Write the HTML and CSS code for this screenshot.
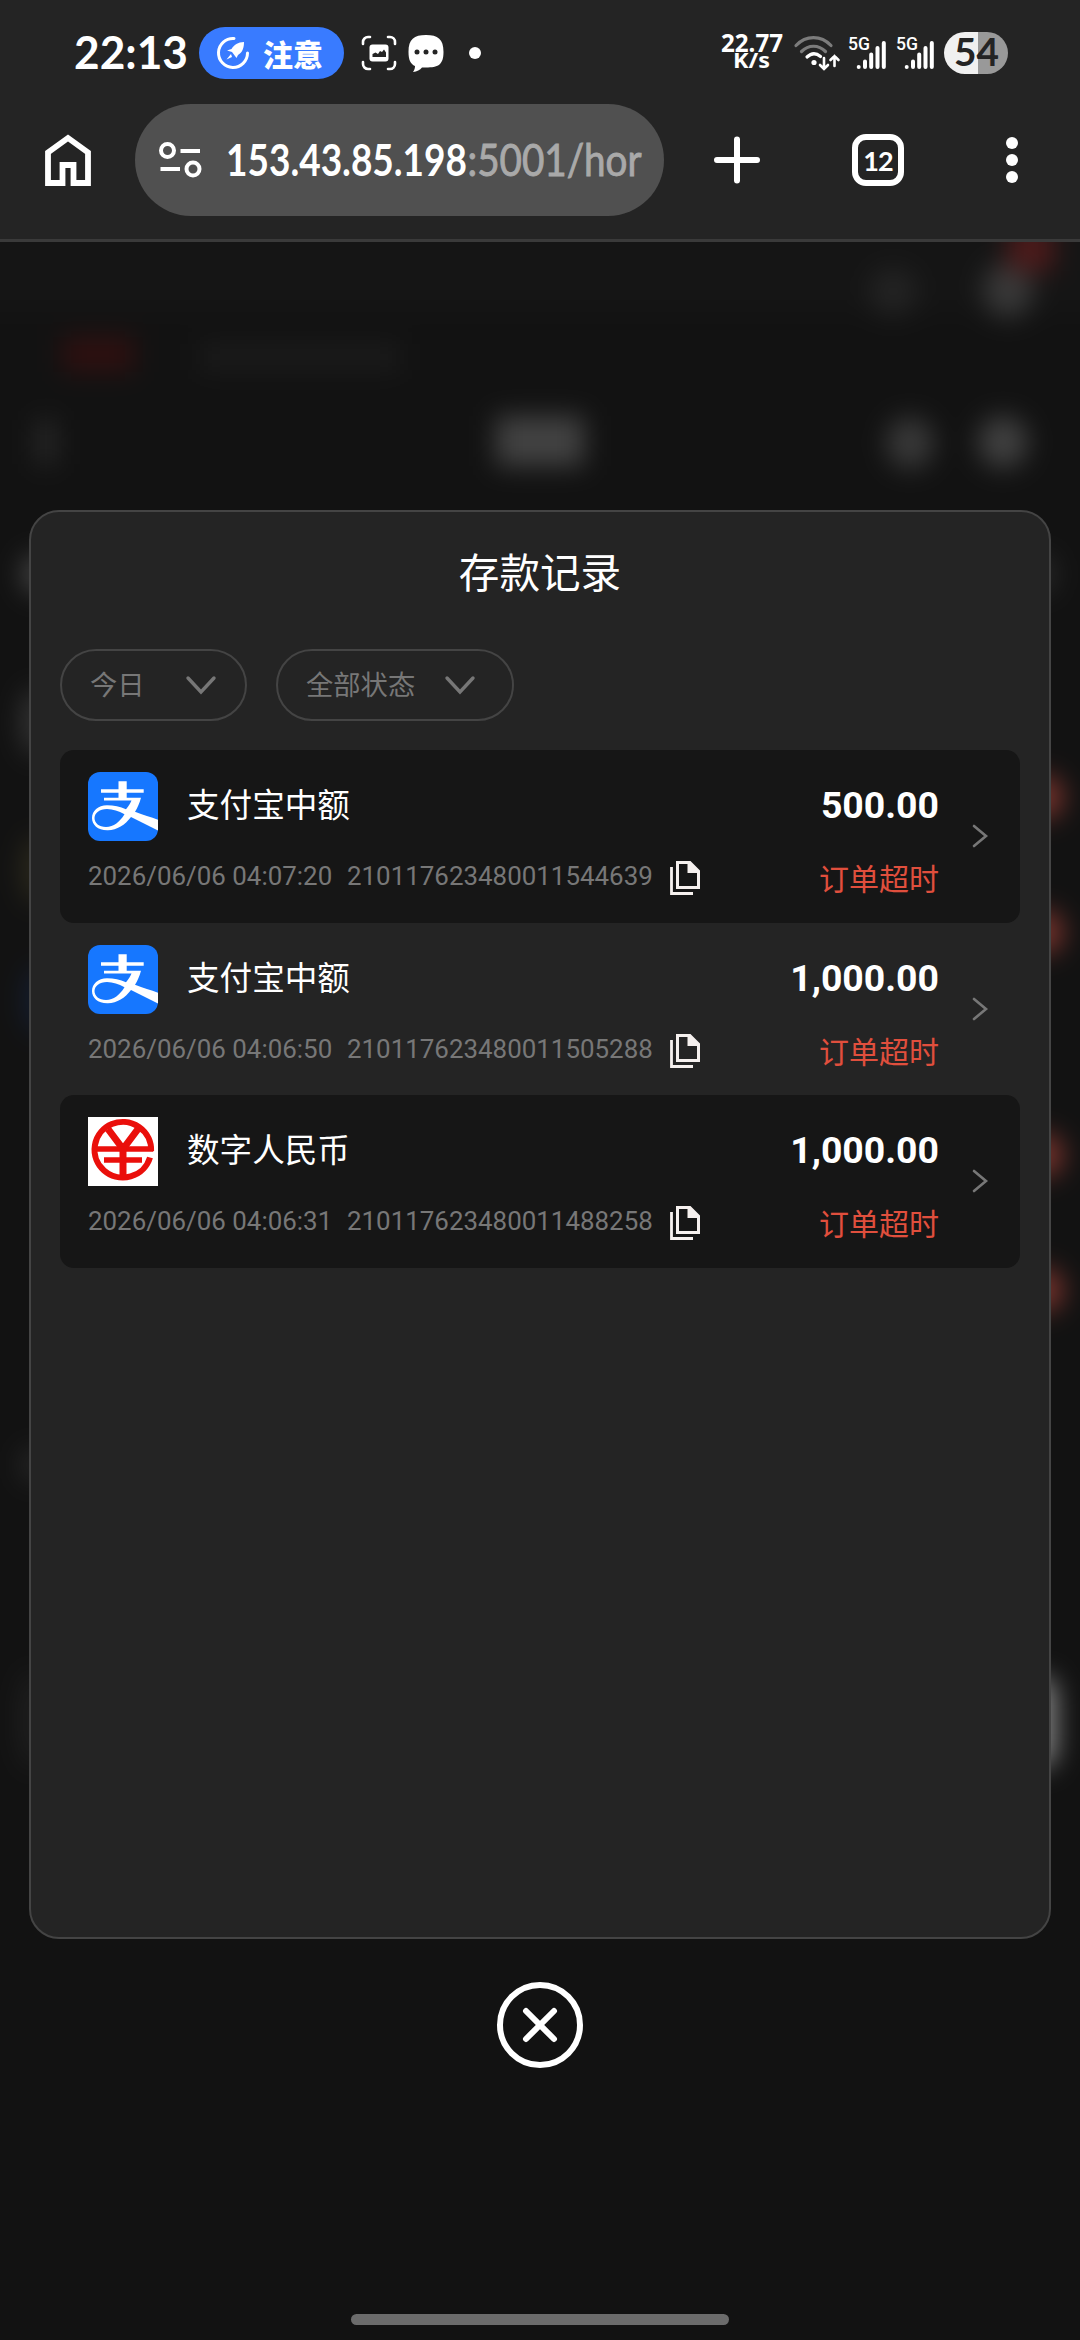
FILE: index.html
```html
<!DOCTYPE html>
<html lang="zh-CN">
<head>
<meta charset="utf-8">
<title>存款记录</title>
<link rel="stylesheet" href="styles.css">
</head>
<body>
<svg class="defs" width="0" height="0" aria-hidden="true">
  <symbol id="alipay" viewBox="0 0 70 69">
    <rect width="70" height="69" rx="12" fill="#1677ff"/>
    <path d="M30.5 9.300h8.200v8h17v3.500h-17v5H53c-1.500 5.500-3.500 10-6 14 8 3 16 5.500 23 8v10.700L43 45c-6 8-14 13-23 13.200C10 58.500 4 53 4 46c0-7 6-12.500 15-12.700 7 0 13 1.500 19 4 2.500-3 4.500-6 5.500-8.700H16v-2.800h14.500v-5H13v-3.500h17.500z" fill="#fff"/>
    <path d="M36.500 42.200c-6-3-11.500-5.200-17.500-5.200-7.500 0-12.500 4-12.500 9s4.500 9 11.500 9c7.500 0 14-5.500 18.500-12.800z" fill="#1677ff"/>
  </symbol>
  <symbol id="ecny" viewBox="0 0 70 69">
    <rect width="70" height="69" fill="#fff"/>
    <g fill="none" stroke="#ea0f0b">
      <path d="M63.100 34A28.300 27.800 0 1 0 62 40.500" stroke-width="6"/>
      <path d="M20 12l15 20 15-20" stroke-width="7"/>
      <path d="M7 32h58M16 43h38" stroke-width="5.500"/>
      <path d="M35 30v31" stroke-width="7"/>
    </g>
  </symbol>
  <symbol id="copy" viewBox="0 0 30 34">
    <path d="M6 0h14.500L30 9.500V28H6zM9 3v22h18V12h-9.500V3z" fill="#f5f0ee" fill-rule="evenodd"/>
    <path d="M1.500 6v26.500H23" fill="none" stroke="#f5f0ee" stroke-width="2.800"/>
  </symbol>
  <symbol id="signal" viewBox="0 0 40 36">
    <g stroke="#fff" stroke-width="4" stroke-linecap="round"><path d="M10.700 32v.1M17 26.500V32M23.200 19.500V32M29.500 13V32M35.800 8V32"/></g>
  </symbol>
</svg>

<header class="status">
  <svg class="clock" width="116" height="60"><text x="0" y="45" textLength="114" lengthAdjust="spacingAndGlyphs">22:13</text></svg>
  <div class="notice">
    <svg width="32" height="32" viewBox="0 0 32 32"><path d="M17 1.500A14.500 14.500 0 1 0 30.500 16" fill="none" stroke="#fff" stroke-width="3" stroke-linecap="round"/><path d="M27 5c-6 0-10 3-12.500 7L10 13.500l5 1.500 3 4 1.500 2L21 18c5-3 6-8 6-13zM14 17l-4.500 5.500L15 20z" fill="#fff"/></svg>
    <span>注意</span>
  </div>
  <svg class="shot" width="36" height="36" viewBox="0 0 36 36"><path d="M2 9V7a5 5 0 0 1 5-5h2M27 2h2a5 5 0 0 1 5 5v2M34 27v2a5 5 0 0 1-5 5h-2M9 34H7a5 5 0 0 1-5-5v-2" fill="none" stroke="#fff" stroke-width="2.600" stroke-linecap="round"/><rect x="8.500" y="9.500" width="19" height="17" rx="3" fill="#fff"/><path d="M11.500 22v-3l3-1.500 2.500 1.500 2-3 2 1 2-2.500 2 3V22z" fill="#242424"/></svg>
  <svg class="chat" width="36" height="37" viewBox="0 0 36 37"><path d="M18 0C30 0 35.500 4 35.500 17S30 32.500 18 32.500h-4C12 35 9 36.500 5 37c1.500-2 2-4 2-6-4.500-2-6.500-6-6.500-14C.500 4 6 0 18 0z" fill="#fff"/><g fill="#242424"><circle cx="9" cy="17" r="2.500"/><circle cx="18" cy="17" r="2.500"/><circle cx="27" cy="17" r="2.500"/></g></svg>
  <span class="dot"></span>
  <svg class="speed" width="64" height="60"><text x="0" y="29" font-size="24.500" textLength="62" lengthAdjust="spacingAndGlyphs">22.77</text><text x="12" y="45" font-size="21.500" textLength="37" lengthAdjust="spacingAndGlyphs">K/s</text></svg>
  <svg class="wifi" width="46" height="36" viewBox="0 0 46 36"><g fill="none" stroke-width="3.200" stroke-linecap="round"><path d="M2 10.500c10-10.500 25-10.500 35 0" stroke="#7c7c7c"/><path d="M7.500 16.500c7-7 17-7 24 0" stroke="#7c7c7c"/><path d="M13 22c4.500-4.300 9-4.300 13.500-.5" stroke="#fff"/></g><circle cx="20" cy="27.500" r="2.600" fill="#fff"/><path d="M30 23v10M26 30l4 4 4-4M40.500 31V21M36.500 25l4-4 4 4" fill="none" stroke="#fff" stroke-width="2.600" stroke-linecap="round"/></svg>
  <svg class="sig" width="40" height="36"><use href="#signal"/><text x="0" y="14.500" textLength="22" lengthAdjust="spacingAndGlyphs">5G</text></svg>
  <svg class="sig sig2" width="40" height="36"><use href="#signal"/><text x="0" y="14.500" textLength="22" lengthAdjust="spacingAndGlyphs">5G</text></svg>
  <svg class="battery" width="64" height="42"><path d="M34 0H21a21 21 0 0 0 0 42h13z" fill="#f0f0f0"/><path d="M34 0h9a21 21 0 0 1 0 42h-9z" fill="#999"/><text x="10" y="34" textLength="45" lengthAdjust="spacingAndGlyphs">54</text></svg>
</header>

<nav class="toolbar">
  <svg class="home" width="46" height="52" viewBox="0 0 46 52"><path d="M3 49V18.500L23 4l20 14.500V49H28.500V31h-11v18z" fill="none" stroke="#fff" stroke-width="5.800"/></svg>
  <div class="address">
    <svg width="43" height="36" viewBox="0 0 43 36"><g fill="none" stroke="#fff" stroke-width="4"><circle cx="8.500" cy="8.500" r="6.500"/><circle cx="34" cy="27" r="6.500"/><path d="M21.500 9H41M1.500 27H21"/></g></svg>
    <svg class="url" width="416" height="60"><text x="0" y="46" textLength="241" lengthAdjust="spacingAndGlyphs">153.43.85.198</text><text class="path" x="241.500" y="46" textLength="174" lengthAdjust="spacingAndGlyphs">:5001/hor</text></svg>
  </div>
  <svg class="plus" width="46" height="48" viewBox="0 0 46 48"><path d="M3 24h40M23 3.500v41" stroke="#fff" stroke-width="6" stroke-linecap="round"/></svg>
  <div class="tabs">12</div>
  <svg class="more" width="12" height="48" viewBox="0 0 12 48"><g fill="#fff"><circle cx="6" cy="7" r="6"/><circle cx="6" cy="24" r="6"/><circle cx="6" cy="41" r="6"/></g></svg>
</nav>

<main class="page">
  <svg class="backdrop" viewBox="0 242 1080 2098" aria-hidden="true">
    <defs><filter id="soft" filterUnits="userSpaceOnUse" x="-100" y="142" width="1280" height="2300" color-interpolation-filters="sRGB"><feGaussianBlur stdDeviation="13"/></filter></defs>
    <g filter="url(#soft)">
      <rect x="-100" y="142" width="1280" height="2300" fill="#121212"/>
      <rect x="-100" y="142" width="1280" height="170" fill="#151515"/>
      <ellipse cx="1008" cy="290" rx="25" ry="28" fill="#383838"/>
      <ellipse cx="893" cy="292" rx="24" ry="24" fill="#232323"/>
      <rect x="1008" y="225" width="46" height="46" fill="#4c1a1a"/>
      <rect x="62" y="336" width="72" height="36" fill="#2e1010"/>
      <rect x="200" y="344" width="200" height="26" fill="#1b1b1b"/>
      <rect x="36" y="420" width="20" height="44" fill="#282828"/>
      <rect x="496" y="416" width="88" height="50" fill="#424242"/>
      <ellipse cx="910" cy="443" rx="24" ry="26" fill="#383838"/>
      <ellipse cx="1003" cy="442" rx="25" ry="26" fill="#404040"/>
      <ellipse cx="38" cy="574" rx="16" ry="20" fill="#444"/>
      <ellipse cx="36" cy="722" rx="15" ry="34" fill="#333"/>
      <ellipse cx="36" cy="870" rx="14" ry="34" fill="#2c291c"/>
      <ellipse cx="38" cy="1000" rx="14" ry="34" fill="#141d30"/>
      <ellipse cx="34" cy="1465" rx="14" ry="18" fill="#262626"/>
      <ellipse cx="32" cy="1720" rx="12" ry="50" fill="#202020"/>
      <g fill="#7c342d"><ellipse cx="1043" cy="797" rx="20" ry="22"/><ellipse cx="1043" cy="932" rx="20" ry="22"/><ellipse cx="1043" cy="1155" rx="20" ry="22"/><ellipse cx="1043" cy="1290" rx="20" ry="22"/></g>
      <rect x="1020" y="1676" width="36" height="92" rx="18" fill="#868686"/>
      <ellipse cx="1043" cy="574" rx="12" ry="20" fill="#2a2a2a"/>
    </g>
  </svg>

  <section class="dialog">
    <h1>存款记录</h1>
    <div class="filters">
      <button class="chip"><span>今日</span><svg width="30" height="18" viewBox="0 0 30 18"><path d="M2 2l13 14L28 2"/></svg></button>
      <button class="chip wide"><span>全部状态</span><svg width="30" height="18" viewBox="0 0 30 18"><path d="M2 2l13 14L28 2"/></svg></button>
    </div>
    <ul class="records">
      <li class="record">
        <div class="info">
          <div class="method"><svg width="70" height="69"><use href="#alipay"/></svg><span>支付宝中额</span></div>
          <div class="meta"><time>2026/06/06 04:07:20</time><span>210117623480011544639</span><svg width="30" height="34"><use href="#copy"/></svg></div>
        </div>
        <div class="result"><strong>500.00</strong><em>订单超时</em></div>
        <svg class="go" width="16" height="24" viewBox="0 0 16 24"><path d="M2 2l12 10L2 22"/></svg>
      </li>
      <li class="record">
        <div class="info">
          <div class="method"><svg width="70" height="69"><use href="#alipay"/></svg><span>支付宝中额</span></div>
          <div class="meta"><time>2026/06/06 04:06:50</time><span>210117623480011505288</span><svg width="30" height="34"><use href="#copy"/></svg></div>
        </div>
        <div class="result"><strong>1,000.00</strong><em>订单超时</em></div>
        <svg class="go" width="16" height="24" viewBox="0 0 16 24"><path d="M2 2l12 10L2 22"/></svg>
      </li>
      <li class="record">
        <div class="info">
          <div class="method"><svg width="70" height="69"><use href="#ecny"/></svg><span>数字人民币</span></div>
          <div class="meta"><time>2026/06/06 04:06:31</time><span>210117623480011488258</span><svg width="30" height="34"><use href="#copy"/></svg></div>
        </div>
        <div class="result"><strong>1,000.00</strong><em>订单超时</em></div>
        <svg class="go" width="16" height="24" viewBox="0 0 16 24"><path d="M2 2l12 10L2 22"/></svg>
      </li>
    </ul>
  </section>

  <svg class="close" width="86" height="86" viewBox="0 0 86 86"><g fill="none" stroke="#fff" stroke-width="6"><circle cx="43" cy="43" r="40"/><path d="M29 29l28 28M57 29L29 57" stroke-linecap="round"/></g></svg>
  <div class="gesture"></div>
</main>
</body>
</html>
```
FILE: styles.css
```css
* { box-sizing: border-box; }
body {
  margin: 0;
  width: 1080px;
  height: 2340px;
  display: flex;
  flex-direction: column;
  overflow: hidden;
  background: #121212;
  color: #fff;
  font-family: Roboto, "Noto Sans CJK SC", sans-serif;
}
svg { display: block; flex: none; overflow: visible; }
svg.defs { position: absolute; }

.status {
  height: 104px;
  padding: 2px 72px 0 74px;
  display: flex;
  align-items: center;
  background: #242424;
  fill: #fff;
}
.clock text { font: 700 46px Lato, sans-serif; }
.clock { margin-top: 2px; }
.notice {
  width: 145px;
  height: 52px;
  margin-left: 9px;
  padding-left: 18px;
  display: flex;
  align-items: center;
  gap: 14px;
  border-radius: 26px;
  background: #397bff;
  font: 900 30px "Noto Sans CJK SC", sans-serif;
}
.notice span { margin-top: -1px; }
.shot { margin-left: 17px; }
.chat { margin-left: 11px; }
.dot { width: 12px; height: 12px; margin-left: 25px; border-radius: 50%; background: #fff; }
.speed { margin-left: 240px; font-family: "Noto Sans", sans-serif; font-weight: 700; }
.wifi { margin-left: 9px; }
.sig { margin-left: 8px; font-size: 18.500px; font-weight: 500; }
.sig2 { margin-left: 8px; }
.battery { margin: 0 0 0 auto; }
.battery text { font: 700 38px Lato, sans-serif; fill: #242424; }

.toolbar {
  height: 138px;
  padding: 0 62px 23px 45px;
  display: flex;
  align-items: center;
  border-bottom: 3px solid #3a3a3a;
  background: #242424;
}
.address {
  width: 529px;
  height: 112px;
  margin-left: 44px;
  padding-left: 24px;
  display: flex;
  align-items: center;
  gap: 24px;
  border-radius: 56px;
  background: #505050;
}
.url { fill: #fff; font: 700 43.500px Lato, sans-serif; }
.url .path { fill: #a9a9a9; stroke: #a9a9a9; stroke-width: .9px; font-weight: 400; }
.plus { margin-left: 50px; }
.tabs {
  width: 52px;
  height: 52px;
  margin-left: 92px;
  display: flex;
  align-items: center;
  justify-content: center;
  border: 6px solid #fff;
  border-radius: 14px;
  font: 700 27px Lato, sans-serif;
  letter-spacing: -1px;
}
.more { margin-left: auto; }

.page {
  position: relative;
  flex: 1;
  display: flex;
  flex-direction: column;
  align-items: center;
  padding-top: 268px;
}
.backdrop { position: absolute; inset: 0; width: 1080px; height: 2098px; overflow: hidden; }

.dialog {
  position: relative;
  width: 1022px;
  height: 1429px;
  padding: 0 29px;
  border: 2px solid #444;
  border-radius: 30px;
  background: #242424;
}
h1 {
  margin: 0;
  padding-top: 32px;
  height: 137px;
  font-size: 40.600px;
  font-weight: 400;
  line-height: 60px;
  text-align: center;
}
.filters { display: flex; gap: 29px; }
.chip {
  width: 187px;
  height: 72px;
  padding: 0 29px;
  display: flex;
  align-items: center;
  justify-content: space-between;
  border: 2px solid #444;
  border-radius: 36px;
  background: none;
  color: #777;
  font: 400 27.300px "Noto Sans CJK SC", sans-serif;
}
.chip span { margin: -4px 0 0 -1px; }
.chip.wide { width: 238px; padding-right: 37px; }
.chip path, .go path { fill: none; stroke: #777; stroke-width: 3.400; stroke-linecap: round; }

.records { margin: 29px 0 0; padding: 0; list-style: none; }
.record {
  height: 172.700px;
  padding: 0 32px 0 28px;
  display: flex;
  border-radius: 14px;
}
.record:nth-child(odd) { background: #161616; }
.info { padding-top: 22px; }
.method { height: 69px; display: flex; align-items: center; gap: 29px; font-size: 32.600px; }
.method span { margin-top: -8px; }
.meta {
  height: 34px;
  margin-top: 20px;
  display: flex;
  align-items: center;
  color: #777;
  font-size: 25.920px;
}
.meta time, .meta span { margin-top: -4px; }
.meta time { width: 259px; }
.meta svg { margin-left: 17px; }
.result {
  margin-left: auto;
  padding-top: 34px;
  display: flex;
  flex-direction: column;
  align-items: flex-end;
}
.result strong { font-size: 37.400px; line-height: 42px; }
.result em { margin-top: 32px; font-size: 30px; font-style: normal; line-height: 44px; color: #e04f3d; }
.go { margin: 74px 0 0 33px; }
.go path { stroke-width: 2.600; }

.close { position: relative; margin-top: 43px; }
.gesture { position: relative; width: 378px; height: 11px; margin-top: auto; margin-bottom: 15px; border-radius: 6px; background: #6b6b6b; }
```
